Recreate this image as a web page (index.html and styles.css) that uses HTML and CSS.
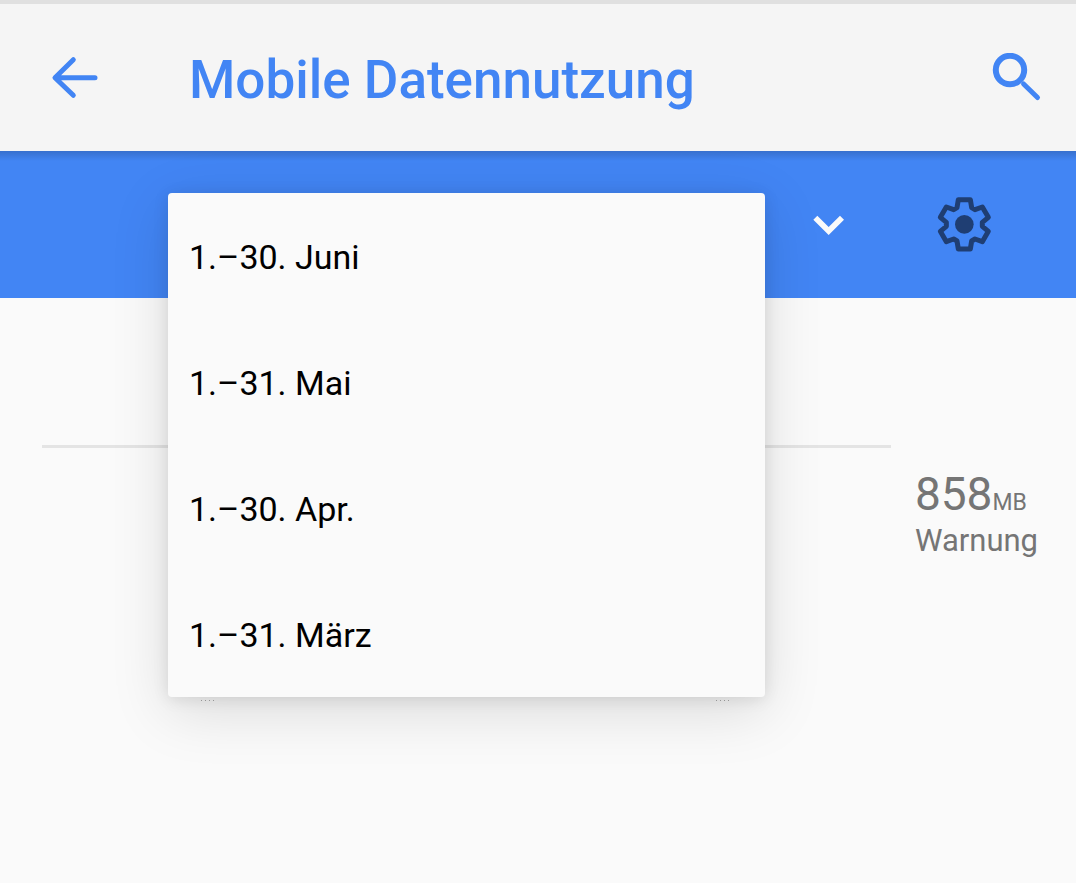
FILE: index.html
```
<!DOCTYPE html>
<html lang="de">
<head>
<meta charset="utf-8">
<meta name="viewport" content="width=device-width, initial-scale=1">
<title>Mobile Datennutzung</title>
<link rel="stylesheet" href="styles.css">
</head>
<body>
<header class="app-bar">
  <button class="icon-button" type="button" aria-label="Zurück">
    <svg class="icon" viewBox="0 0 54 54" aria-hidden="true"><path class="stroke round" d="M25.3 6.7 7 24.7 25.3 42.3M8 24.7H47"/></svg>
  </button>
  <h1 class="title">Mobile Datennutzung</h1>
  <button class="icon-button" type="button" aria-label="Suchen">
    <svg class="icon" viewBox="0 0 54 54" aria-hidden="true"><circle class="stroke ring" cx="20" cy="17" r="14.2"/><path class="stroke round" d="M33.6 31 47.5 44.5"/></svg>
  </button>
</header>

<section class="cycle-bar">
  <button class="spinner" type="button" aria-label="Zeitraum auswählen" aria-haspopup="true" aria-expanded="true">
    <svg class="chevron" viewBox="0 0 108 72" aria-hidden="true"><path d="M16 14 56 54 96 14"/></svg>
  </button>
  <button class="icon-button" type="button" aria-label="Einstellungen">
    <svg class="gear" viewBox="0 0 168 168" aria-hidden="true">
      <path class="gear-rim" d="M67 8h36l4 24 10 6 22-8 18 31-18 15v12l18 15-18 31-22-8-10 6-4 24H67l-4-24-10-6-22 8-18-31 18-15V76L13 61l18-31 22 8 10-6z"/>
      <circle cx="85" cy="82" r="28"/>
    </svg>
  </button>
  <ul class="menu">
    <li><button class="menu-item" type="button">1.–30. Juni</button></li>
    <li><button class="menu-item" type="button">1.–31. Mai</button></li>
    <li><button class="menu-item" type="button">1.–30. Apr.</button></li>
    <li><button class="menu-item" type="button">1.–31. März</button></li>
  </ul>
</section>

<main class="usage">
  <div class="chart">
    <div class="ticks"><span class="tick"></span><span class="tick"></span></div>
  </div>
  <div class="warning">
    <p class="amount">858<span class="unit">MB</span></p>
    <p class="caption">Warnung</p>
  </div>
</main>
</body>
</html>
```
FILE: styles.css
```
* {
  box-sizing: border-box;
}

body {
  margin: 0;
  min-height: 100vh;
  background: #fafafa;
  color: #757575;
  font-family: Roboto, "Liberation Sans", sans-serif;
}

button {
  margin: 0;
  padding: 0;
  border: 0;
  background: none;
  color: inherit;
  font: inherit;
  cursor: pointer;
}

svg {
  display: block;
}

.app-bar {
  display: flex;
  align-items: center;
  gap: 87px;
  min-height: 151px;
  padding: 4px 32px 0 48px;
  border-top: 4px solid #e0e0e0;
  background: #f5f5f5;
  color: #4285f4;
}

.title {
  flex: 1;
  margin: 0;
  font-size: 53px;
  font-weight: 500;
  line-height: 64px;
  white-space: nowrap;
}

.icon {
  width: 54px;
  height: 54px;
}

.stroke {
  fill: none;
  stroke: currentColor;
  stroke-width: 5;
}

.ring {
  stroke-width: 6;
}

.round {
  stroke-linecap: round;
  stroke-linejoin: round;
}

.cycle-bar {
  position: relative;
  display: flex;
  justify-content: flex-end;
  align-items: center;
  gap: 90px;
  min-height: 147px;
  padding: 0 84px 0 168px;
  background: linear-gradient(rgba(0, 0, 0, 0.16), transparent 10px) #4285f4;
}

.spinner {
  flex: 1;
  display: flex;
  justify-content: flex-end;
}

.chevron {
  width: 36px;
  height: 24px;
  fill: none;
  stroke: #fafafa;
  stroke-width: 17;
}

.gear {
  width: 56px;
  height: 56px;
  fill: #1f3e73;
}

.gear-rim {
  fill: none;
  stroke: #1f3e73;
  stroke-width: 15;
  stroke-linejoin: round;
}

.menu {
  position: absolute;
  z-index: 1;
  top: 42px;
  left: 168px;
  right: 311px;
  margin: 0;
  padding: 0;
  border-radius: 4px;
  background: #fafafa;
  color: #000;
  list-style: none;
  box-shadow: 0 14px 58px rgba(0, 0, 0, 0.13), 0 2px 16px rgba(0, 0, 0, 0.1);
}

.menu-item {
  display: block;
  width: 100%;
  padding: 44px 21px 42px;
  font-size: 34px;
  line-height: 40px;
  text-align: left;
}

.usage {
  display: flex;
  gap: 24px;
  padding: 147px 38px 0 42px;
}

.chart {
  flex: 1;
  border-top: 3px solid #e4e4e4;
}

.ticks {
  display: flex;
  justify-content: space-between;
  padding: 252px 159px 0;
}

.tick {
  width: 16px;
  height: 1px;
  background: repeating-linear-gradient(90deg, #aaa 0 1px, transparent 1px 4px);
}

.warning {
  padding-top: 26px;
}

.warning p {
  margin: 0;
}

.amount {
  font-size: 46px;
  line-height: 46px;
}

.unit {
  font-size: 23px;
}

.caption {
  font-size: 31px;
  line-height: 30px;
}
```
